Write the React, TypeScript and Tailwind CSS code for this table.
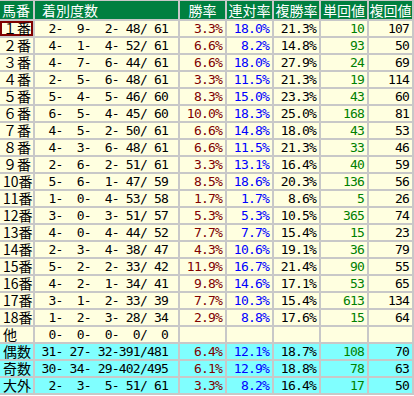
const HEADERS = ["馬番", "着別度数", "勝率", "連対率", "複勝率", "単回値", "複回値"];

type Row = {
  label: string;
  rec: number[];
  win?: string;
  ren?: string;
  fuku?: string;
  tan?: number;
  fukuKai?: number;
  total?: boolean;
};

const ROWS: Row[] = [
  { label: "１番", rec: [2, 9, 2, 48, 61], win: "3.3%", ren: "18.0%", fuku: "21.3%", tan: 10, fukuKai: 107 },
  { label: "２番", rec: [4, 1, 4, 52, 61], win: "6.6%", ren: "8.2%", fuku: "14.8%", tan: 93, fukuKai: 50 },
  { label: "３番", rec: [4, 7, 6, 44, 61], win: "6.6%", ren: "18.0%", fuku: "27.9%", tan: 24, fukuKai: 69 },
  { label: "４番", rec: [2, 5, 6, 48, 61], win: "3.3%", ren: "11.5%", fuku: "21.3%", tan: 19, fukuKai: 114 },
  { label: "５番", rec: [5, 4, 5, 46, 60], win: "8.3%", ren: "15.0%", fuku: "23.3%", tan: 43, fukuKai: 60 },
  { label: "６番", rec: [6, 5, 4, 45, 60], win: "10.0%", ren: "18.3%", fuku: "25.0%", tan: 168, fukuKai: 81 },
  { label: "７番", rec: [4, 5, 2, 50, 61], win: "6.6%", ren: "14.8%", fuku: "18.0%", tan: 43, fukuKai: 53 },
  { label: "８番", rec: [4, 3, 6, 48, 61], win: "6.6%", ren: "11.5%", fuku: "21.3%", tan: 33, fukuKai: 46 },
  { label: "９番", rec: [2, 6, 2, 51, 61], win: "3.3%", ren: "13.1%", fuku: "16.4%", tan: 40, fukuKai: 59 },
  { label: "10番", rec: [5, 6, 1, 47, 59], win: "8.5%", ren: "18.6%", fuku: "20.3%", tan: 136, fukuKai: 56 },
  { label: "11番", rec: [1, 0, 4, 53, 58], win: "1.7%", ren: "1.7%", fuku: "8.6%", tan: 5, fukuKai: 26 },
  { label: "12番", rec: [3, 0, 3, 51, 57], win: "5.3%", ren: "5.3%", fuku: "10.5%", tan: 365, fukuKai: 74 },
  { label: "13番", rec: [4, 0, 4, 44, 52], win: "7.7%", ren: "7.7%", fuku: "15.4%", tan: 15, fukuKai: 23 },
  { label: "14番", rec: [2, 3, 4, 38, 47], win: "4.3%", ren: "10.6%", fuku: "19.1%", tan: 36, fukuKai: 79 },
  { label: "15番", rec: [5, 2, 2, 33, 42], win: "11.9%", ren: "16.7%", fuku: "21.4%", tan: 90, fukuKai: 55 },
  { label: "16番", rec: [4, 2, 1, 34, 41], win: "9.8%", ren: "14.6%", fuku: "17.1%", tan: 53, fukuKai: 65 },
  { label: "17番", rec: [3, 1, 2, 33, 39], win: "7.7%", ren: "10.3%", fuku: "15.4%", tan: 613, fukuKai: 134 },
  { label: "18番", rec: [1, 2, 3, 28, 34], win: "2.9%", ren: "8.8%", fuku: "17.6%", tan: 15, fukuKai: 64 },
  { label: "他", rec: [0, 0, 0, 0, 0] },
  { label: "偶数", rec: [31, 27, 32, 391, 481], win: "6.4%", ren: "12.1%", fuku: "18.7%", tan: 108, fukuKai: 70, total: true },
  { label: "奇数", rec: [30, 34, 29, 402, 495], win: "6.1%", ren: "12.9%", fuku: "18.8%", tan: 78, fukuKai: 63, total: true },
  { label: "大外", rec: [2, 3, 5, 51, 61], win: "3.3%", ren: "8.2%", fuku: "16.4%", tan: 17, fukuKai: 50, total: true },
];

const pad = (n: number, w: number) => String(n).padStart(w, " ");
const fmtRec = (r: number[]) =>
  `${pad(r[0], 2)}-${pad(r[1], 3)}-${pad(r[2], 3)}-${pad(r[3], 3)}/${pad(r[4], 3)}`;

const jp = "font-['Noto_Sans_CJK_JP',sans-serif]";
const mono = "font-['DejaVu_Sans_Mono','Noto_Sans_CJK_JP',monospace] text-[13px] tracking-[-0.8px] whitespace-pre";

export default function App() {
  return (
    <div className="w-[414px] bg-white">
      <div className="grid grid-cols-[33px_143px_45px_45px_45px_46px_43px] gap-[2px] bg-[#c8c8c8] pt-px pr-[2px] pb-[2px]">
        {HEADERS.map((h, i) => (
          <div
            key={h}
            className={`h-[18px] bg-[#008040] text-white text-[14px] leading-[18px] ${jp} ${
              i === 0 ? "pl-[2px]" : i === 1 ? "pl-[7px]" : "text-center"
            }`}
          >
            {h}
          </div>
        ))}
        {ROWS.map((r, idx) => {
          const bg = r.total ? "bg-[#80ffff]" : "bg-[#ffffe0]";
          const cell = `h-[15px] ${bg} text-right pr-[3px] leading-[15px] ${mono}`;
          return (
            <div key={r.label} className="contents">
              <div
                className={`h-[15px] whitespace-nowrap ${bg} text-[14px] text-black ${jp} ${
                  idx === 0
                    ? "border-2 border-[#800000] pl-[1px] leading-[11px]"
                    : "pl-[3px] leading-[15px]"
                }`}
              >
                {r.label}
              </div>
              <div className={`${cell} pr-[10px] text-black`}>{fmtRec(r.rec)}</div>
              <div className={`${cell} text-[#800000]`}>{r.win ?? ""}</div>
              <div className={`${cell} text-[#0000ff]`}>{r.ren ?? ""}</div>
              <div className={`${cell} text-black`}>{r.fuku ?? ""}</div>
              <div className={`${cell} text-[#008000]`}>{r.tan ?? ""}</div>
              <div className={`${cell} text-black`}>{r.fukuKai ?? ""}</div>
            </div>
          );
        })}
      </div>
    </div>
  );
}
